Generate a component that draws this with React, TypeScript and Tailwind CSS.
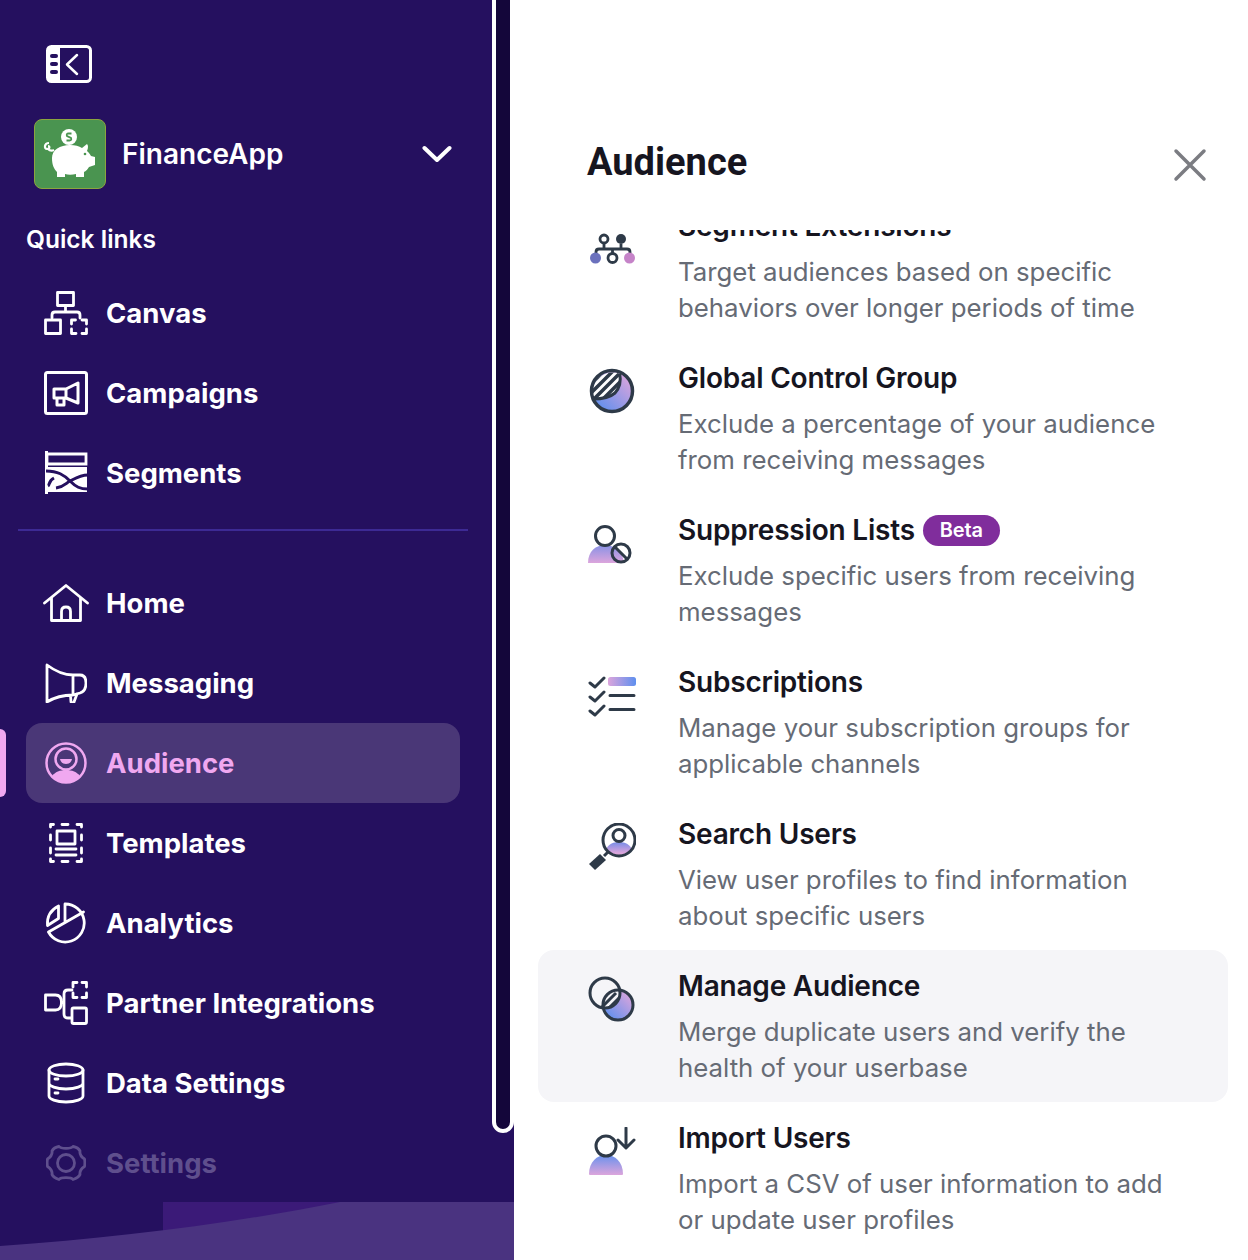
import type { ReactNode } from 'react';

const Stroke = ({ w, h, children, sw = 2.8 }: { w: number; h: number; children: ReactNode; sw?: number }) => (
  <svg
    width={w}
    height={h}
    viewBox={`0 0 ${w} ${h}`}
    fill="none"
    stroke="currentColor"
    strokeWidth={sw}
    strokeLinecap="round"
    strokeLinejoin="round"
  >
    {children}
  </svg>
);

const CanvasIcon = () => (
  <Stroke w={44} h={44}>
    <rect x="13.5" y="1.5" width="16" height="13" />
    <path d="M21.5 14.5v6M8 27v-3q0-3 3-3h22q3 0 3 3v3" />
    <rect x="1.5" y="29" width="15" height="13.5" />
    <path d="M27.5 33v-4h4M38 29h4.500v4M42.500 38v4.500h-4.500M32 42.500h-4.500v-4.500" />
  </Stroke>
);

const CampaignsIcon = () => (
  <Stroke w={44} h={44} sw={3}>
    <rect x="1.500" y="1.500" width="41" height="41" rx="2" />
    <path d="M10 18h12l12-6v20l-12-5H10zM22 18v9M13 27v7h7v-7" />
  </Stroke>
);

const SegmentsIcon = () => (
  <svg width="44" height="44" viewBox="0 0 44 44" fill="none">
    <path d="M1 0h3v43H1z" fill="white" />
    <path d="M3 3h39v10H3z" stroke="white" strokeWidth="2.800" />
    <path d="M3 16h40v25H3z" fill="white" />
    <path d="M2 20C14 20 20 24 26 30S36 38 44 38" stroke="#25105f" strokeWidth="3" />
    <path d="M10 27C4 30 6 34 4 35M44 24C36 24 30 28 26 30S20 36 12 37" stroke="#25105f" strokeWidth="3" />
  </svg>
);

const HomeIcon = () => (
  <Stroke w={46} h={38}>
    <path d="M1.500 19 23 1.500 44.500 19M8.500 14v22.500h29V14M18.500 36.500v-9q0-4.500 4.500-4.500t4.500 4.500v9" />
  </Stroke>
);

const MessagingIcon = () => (
  <Stroke w={42} h={40}>
    <path d="M2 2c8 6 18 10 26 10v20c-8 0-18 2-26 7zM28 12h7q6 0 6 8t-6 10l-7 2M25.500 32.500l.5 6.500q2 2 3 0l3-8" />
  </Stroke>
);

const AudienceIcon = () => (
  <svg width="42" height="42" viewBox="0 0 42 42" fill="none">
    <circle cx="21" cy="21" r="19.500" stroke="currentColor" strokeWidth="2.500" />
    <circle cx="21" cy="17" r="10.500" stroke="currentColor" strokeWidth="2.500" />
    <path d="M15 17h12q-1 5-6 5t-6-5z" fill="currentColor" />
    <path d="M7 34c3-4 8-6 14-6s11 2 14 6c-3 4-8 7-14 7s-11-3-14-7z" fill="currentColor" />
  </svg>
);

const TemplatesIcon = () => (
  <Stroke w={36} h={42}>
    <path d="M1.500 5V2.500h3M13 2.500h6M28 2.500h4.500V5M1.500 13v5M1.500 26v5M32.500 13v5M32.500 26v5M1.500 37v2.500h3M13 39.500h6M28 39.500h4.500V37" transform="translate(1 0)" />
    <rect x="9" y="9" width="18" height="13" />
    <path d="M8 27h20M8 33h20" />
  </Stroke>
);

const AnalyticsIcon = () => (
  <Stroke w={42} h={42}>
    <path d="M20 2A19 19 0 1 1 3.500 30L38.500 10M20 2V20" />
    <path d="M13.500 4V16.500L2.500 23.500Q1.500 10 13.500 4z" />
  </Stroke>
);

const PartnerIcon = () => (
  <Stroke w={44} h={44}>
    <path d="M1.500 14h10q6 0 6 7.500t-6 7.500h-10z" />
    <path d="M17.500 21.500H20M28 9h-4q-4 0-4 4v20q0 4 4 4h3" />
    <path d="M29 6V1.500h4M38 1.500h4.500V6M42.500 12v4.500H38M33 16.500h-4V12" />
    <rect x="28" y="27" width="14.500" height="15.500" rx="1.500" />
  </Stroke>
);

const DataIcon = () => (
  <Stroke w={38} h={42}>
    <ellipse cx="19" cy="8" rx="17" ry="6" />
    <path d="M2 8v26c0 3 7 6 17 6s17-3 17-6V8M2 21c0 3 7 6 17 6s17-3 17-6" />
    <path d="M8 17h3M8 31h3" />
  </Stroke>
);

const SettingsIcon = () => (
  <Stroke w={40} h={38}>
    <path d="M13 2.500c2 2.500 12 2.500 14 0 3 .5 6 2.500 7 4.500-.5 3 1.500 6 4.500 8 .5 2.500.5 5 0 7.500-3 2-5 5-4.500 8-1 2-4 4-7 5-2-2.500-12-2.500-14 0-3-1-6-3-7-5 .5-3-1.500-6-4.500-8-.5-2.500-.5-5 0-7.500 3-2 5-5 4.500-8 1-2 4-4 7-4.500z" />
    <circle cx="20" cy="19" r="8.500" />
  </Stroke>
);

function ToggleIcon() {
  return (
    <svg width="46" height="38" viewBox="0 0 46 38" fill="none">
      <rect x="1.500" y="1.500" width="43" height="35" rx="4" stroke="white" strokeWidth="3" />
      <path d="M4 2h10v34H4q-3 0-3-3V5q0-3 3-3z" fill="white" />
      <rect x="4" y="9" width="8" height="4" rx="2" fill="#25105f" />
      <rect x="4" y="17" width="8" height="4" rx="2" fill="#25105f" />
      <rect x="4" y="25" width="8" height="4" rx="2" fill="#25105f" />
      <path d="M31 10 21 19.500 31 29" stroke="white" strokeWidth="2.500" strokeLinecap="round" strokeLinejoin="round" />
    </svg>
  );
}

function PiggyLogo() {
  return (
    <div className="flex h-[70px] w-[72px] items-center justify-center rounded-lg border border-[#8ba53f] bg-[#4a9450]">
      <svg width="58" height="56" viewBox="0 0 58 56" fill="none">
        <circle cx="28" cy="11" r="8" fill="white" />
        <path d="M30.500 7.500h-3q-2.500 0-1.500 2.500l4 2q1 2.500-1.500 2.500h-3" stroke="#4a9450" strokeWidth="1.800" />
        <path d="M8 17c-5 0-5 6-2 6s3-3 1-3M7 23c2 2 4 2 6 1" stroke="white" strokeWidth="2.200" />
        <path d="M11 32c0-8 8-13 18-13 5 0 9 1 12 3l5-4q2 2 0 7c2 2 3 3 4 5l4 1v8l-6 2c-2 3-3 4-5 5v5h-8v-3c-4 1-8 1-11 0v3h-8v-5c-3-3-5-7-5-14z" fill="white" />
        <circle cx="44" cy="28" r="1.300" fill="#4a9450" />
      </svg>
    </div>
  );
}

const GRAD = (id: string, x1: number, y1: number, x2: number, y2: number, from = '#5e8fee', to = '#dca5dc') => (
  <linearGradient id={id} gradientUnits="userSpaceOnUse" x1={x1} y1={y1} x2={x2} y2={y2}>
    <stop offset="0" stopColor={from} />
    <stop offset="1" stopColor={to} />
  </linearGradient>
);

const DARK = '#2e3a48';

function ExtensionsIcon() {
  return (
    <svg width="48" height="36" viewBox="0 0 48 36" fill="none">
      <circle cx="16" cy="8" r="4" stroke={DARK} strokeWidth="2.800" />
      <circle cx="33" cy="8" r="5" fill={DARK} />
      <path d="M8 23v-2q0-3 3-3h28q3 0 3 3v2M16 12v6M33 13v5M24.500 18v4" stroke={DARK} strokeWidth="2.800" />
      <circle cx="7.500" cy="27" r="5.500" fill="#6b71bd" />
      <circle cx="24.500" cy="27" r="4.500" stroke={DARK} strokeWidth="2.800" />
      <circle cx="41.500" cy="27" r="5.500" fill="#c583c8" />
    </svg>
  );
}

function ControlIcon() {
  const top = 'M5 32Q20 32 27 26Q34 18 31.700 6.700A20.500 20.500 0 0 0 5 32z';
  return (
    <svg width="48" height="48" viewBox="0 0 48 48" fill="none">
      <defs>
        {GRAD('ctl', 10, 42, 42, 10)}
        <clipPath id="ctlc">
          <path d={top} />
        </clipPath>
      </defs>
      <circle cx="24" cy="24" r="20" fill="url(#ctl)" />
      <path d={top} fill="white" />
      <g clipPath="url(#ctlc)" stroke={DARK} strokeWidth="3.500">
        <path d="M0 20L20 0M0 29L29 0M0 38L38 0M9 38L47 0" />
      </g>
      <path d="M5 32Q20 32 27 26Q34 18 31.700 6.700" stroke={DARK} strokeWidth="3" />
      <circle cx="24" cy="24" r="20.500" stroke={DARK} strokeWidth="3.500" />
    </svg>
  );
}

function SuppressionIcon() {
  return (
    <svg width="48" height="40" viewBox="0 0 48 40" fill="none">
      <defs>{GRAD('sup', 0, 18, 0, 38, '#7f8fe6', '#dca5dc')}</defs>
      <path d="M0 38c0-12 8-18 17-18s18 6 19 18z" fill="url(#sup)" />
      <circle cx="17" cy="11" r="9.500" fill="white" stroke={DARK} strokeWidth="3" />
      <circle cx="33" cy="28" r="9" fill="none" stroke={DARK} strokeWidth="3" />
      <path d="M27 22 39 34" stroke={DARK} strokeWidth="3" />
    </svg>
  );
}

function SubscriptionsIcon() {
  return (
    <svg width="48" height="42" viewBox="0 0 48 42" fill="none">
      <defs>{GRAD('subs', 20, 0, 48, 0, '#dca5dc', '#5e8fee')}</defs>
      <rect x="20" y="1" width="28" height="9" rx="2.500" fill="url(#subs)" />
      <path d="M2 7l5 4L16 2M2 21l5 4 9-9M2 35l5 4 9-9" stroke={DARK} strokeWidth="3" strokeLinecap="round" strokeLinejoin="round" />
      <path d="M22 19.500h24M22 33.500h24" stroke={DARK} strokeWidth="3" strokeLinecap="round" />
    </svg>
  );
}

function SearchUserIcon() {
  return (
    <svg width="48" height="48" viewBox="0 0 48 48" fill="none">
      <defs>
        {GRAD('srch', 0, 20, 0, 30, '#7f8fe6', '#dca5dc')}
        <clipPath id="srchc">
          <circle cx="31" cy="17" r="15" />
        </clipPath>
      </defs>
      <path d="M17 32c0-9 6-13 14-13s14 4 14 13z" fill="url(#srch)" clipPath="url(#srchc)" />
      <circle cx="31" cy="12.500" r="6" fill="white" stroke={DARK} strokeWidth="3" />
      <circle cx="31" cy="17" r="16" stroke={DARK} strokeWidth="3" />
      <path d="M20 29 16 33" stroke={DARK} strokeWidth="3" />
      <path d="M12 31l6 6L7 47l-6-6z" fill={DARK} />
    </svg>
  );
}

function ManageIcon() {
  return (
    <svg width="48" height="48" viewBox="0 0 48 48" fill="none">
      <defs>
        {GRAD('mng', 18, 42, 42, 18)}
        <clipPath id="mngc">
          <circle cx="17" cy="18" r="15" />
        </clipPath>
      </defs>
      <circle cx="30" cy="30" r="15" fill="url(#mng)" />
      <g clipPath="url(#mngc)">
        <circle cx="30" cy="30" r="15" fill="#f5f5f8" />
        <path d="M14 32 28 18M20 34 34 20" stroke={DARK} strokeWidth="3" />
      </g>
      <circle cx="17" cy="18" r="15" stroke={DARK} strokeWidth="3" />
      <circle cx="30" cy="30" r="15" stroke={DARK} strokeWidth="3" />
    </svg>
  );
}

function ImportIcon() {
  return (
    <svg width="48" height="48" viewBox="0 0 48 48" fill="none">
      <defs>{GRAD('imp', 0, 26, 0, 48, '#5e8fee', '#dca5dc')}</defs>
      <path d="M1 47c0-12 8-19 17-19s17 7 17 19q0 1-1 1H2q-1 0-1-1z" fill="url(#imp)" />
      <circle cx="18" cy="19" r="10" fill="white" stroke={DARK} strokeWidth="3" />
      <path d="M38 1v19M30 13l8 8 8-8" stroke={DARK} strokeWidth="3" strokeLinecap="round" strokeLinejoin="round" />
    </svg>
  );
}

const QUICK_LINKS = [
  { label: 'Canvas', icon: <CanvasIcon /> },
  { label: 'Campaigns', icon: <CampaignsIcon /> },
  { label: 'Segments', icon: <SegmentsIcon /> },
];

const NAV_ITEMS = [
  { label: 'Home', icon: <HomeIcon /> },
  { label: 'Messaging', icon: <MessagingIcon /> },
  { label: 'Audience', icon: <AudienceIcon />, active: true },
  { label: 'Templates', icon: <TemplatesIcon /> },
  { label: 'Analytics', icon: <AnalyticsIcon /> },
  { label: 'Partner Integrations', icon: <PartnerIcon /> },
  { label: 'Data Settings', icon: <DataIcon /> },
  { label: 'Settings', icon: <SettingsIcon />, faded: true },
];

const FEATURES: { title: string; desc: string[]; icon: ReactNode; iconClass?: string; beta?: boolean; hover?: boolean }[] = [
  {
    title: 'Segment Extensions',
    desc: ['Target audiences based on specific', 'behaviors over longer periods of time'],
    icon: <ExtensionsIcon />,
    iconClass: 'mt-[10px]',
  },
  {
    title: 'Global Control Group',
    desc: ['Exclude a percentage of your audience', 'from receiving messages'],
    icon: <ControlIcon />,
  },
  {
    title: 'Suppression Lists',
    desc: ['Exclude specific users from receiving', 'messages'],
    icon: <SuppressionIcon />,
    iconClass: 'mt-[2px]',
    beta: true,
  },
  {
    title: 'Subscriptions',
    desc: ['Manage your subscription groups for', 'applicable channels'],
    icon: <SubscriptionsIcon />,
    iconClass: 'mt-[2px]',
  },
  {
    title: 'Search Users',
    desc: ['View user profiles to find information', 'about specific users'],
    icon: <SearchUserIcon />,
  },
  {
    title: 'Manage Audience',
    desc: ['Merge duplicate users and verify the', 'health of your userbase'],
    icon: <ManageIcon />,
    hover: true,
  },
  {
    title: 'Import Users',
    desc: ['Import a CSV of user information to add', 'or update user profiles'],
    icon: <ImportIcon />,
  },
];

function NavRow({ label, icon, active, faded }: { label: string; icon: ReactNode; active?: boolean; faded?: boolean }) {
  return (
    <div
      className={
        'relative ml-[26px] flex h-20 w-[434px] items-center rounded-2xl text-[27.5px] font-bold ' +
        (active ? 'bg-[#4a3777] text-[#f0a8f0]' : faded ? 'text-[#5f4f8d]' : 'text-white')
      }
    >
      {active && <div className="absolute top-[6px] left-[-26px] h-[68px] w-[6px] rounded-r-lg bg-[#f0a8f0]" />}
      <div className="flex w-[80px] shrink-0 justify-center pr-px">{icon}</div>
      <span className="pt-0.5">{label}</span>
    </div>
  );
}

export default function App() {
  return (
    <div className="flex h-[1260px] w-[1248px] overflow-hidden bg-white font-['Inter','Liberation_Sans',sans-serif]">
      <aside className="relative h-full w-[514px] shrink-0 overflow-hidden bg-[#25105f]">
        <div className="absolute top-[-10px] right-0 h-[1143px] w-[22px] rounded-b-[11px] border-4 border-white bg-[#14063a]" />
        <svg className="absolute bottom-0 left-0" width="514" height="58" viewBox="0 0 514 58">
          <path d="M163 0h351v58H163z" fill="#3b1a78" />
          <path d="M0 44C120 36 240 20 340 0h174v58H0z" fill="#4a3380" />
        </svg>

        <div className="relative pt-[45px]">
          <div className="ml-[46px] h-[38px]">
            <ToggleIcon />
          </div>
          <div className="mt-9 ml-[34px] flex h-[70px] w-[418px] items-center">
            <PiggyLogo />
            <span className="ml-4 text-[28px] font-semibold text-white">FinanceApp</span>
            <svg className="ml-auto" width="30" height="18" viewBox="0 0 30 18" fill="none">
              <path d="M2.500 3 15 15 27.500 3" stroke="white" strokeWidth="4" strokeLinecap="round" strokeLinejoin="round" />
            </svg>
          </div>
          <div className="mt-[32px] ml-[26px] text-[24.5px] leading-9 font-semibold text-white">Quick links</div>
          <div className="mt-[16px]">
            {QUICK_LINKS.map((item) => (
              <NavRow key={item.label} {...item} />
            ))}
          </div>
          <div className="mt-[16px] mb-[32px] ml-[18px] h-[2px] w-[450px] bg-[#3d2a94]" />
          {NAV_ITEMS.map((item) => (
            <NavRow key={item.label} {...item} />
          ))}
        </div>
      </aside>

      <main className="flex h-full min-w-0 flex-1 flex-col">
        <header className="flex h-[230px] shrink-0 items-start justify-between pt-[137px] pr-[41px] pl-[73px]">
          <h1 className="font-['Roboto',sans-serif] text-[38px] leading-[50px] font-bold text-[#16151f]">Audience</h1>
          <svg className="mt-[11px]" width="34" height="34" viewBox="0 0 34 34" fill="none">
            <path d="M3 3 31 31M31 3 3 31" stroke="#7b7c82" strokeWidth="3.500" strokeLinecap="round" />
          </svg>
        </header>
        <div className="min-h-0 flex-1 overflow-hidden">
          <ul className="mt-[-40px] ml-6 w-[690px]">
            {FEATURES.map((f) => (
              <li
                key={f.title}
                className={'flex h-[152px] rounded-2xl pt-[18px] pl-[50px] ' + (f.hover ? 'bg-[#f5f5f8]' : '')}
              >
                <div className={'flex h-[62px] w-[48px] shrink-0 items-center justify-center ' + (f.iconClass ?? '')}>
                  {f.icon}
                </div>
                <div className="ml-[42px] min-w-0">
                  <div className="flex h-9 items-center text-[28px] font-semibold tracking-[-0.2px] text-[#16151f]">
                    {f.title}
                    {f.beta && (
                      <span className="ml-2 rounded-full bg-[#802d9c] px-[17px] text-[20px] leading-[31px] text-white">
                        Beta
                      </span>
                    )}
                  </div>
                  <div className="mt-[10px] text-[25.8px] leading-9 text-[#666b75]">
                    {f.desc.map((line) => (
                      <div key={line} className="whitespace-nowrap">
                        {line}
                      </div>
                    ))}
                  </div>
                </div>
              </li>
            ))}
          </ul>
        </div>
      </main>
    </div>
  );
}
